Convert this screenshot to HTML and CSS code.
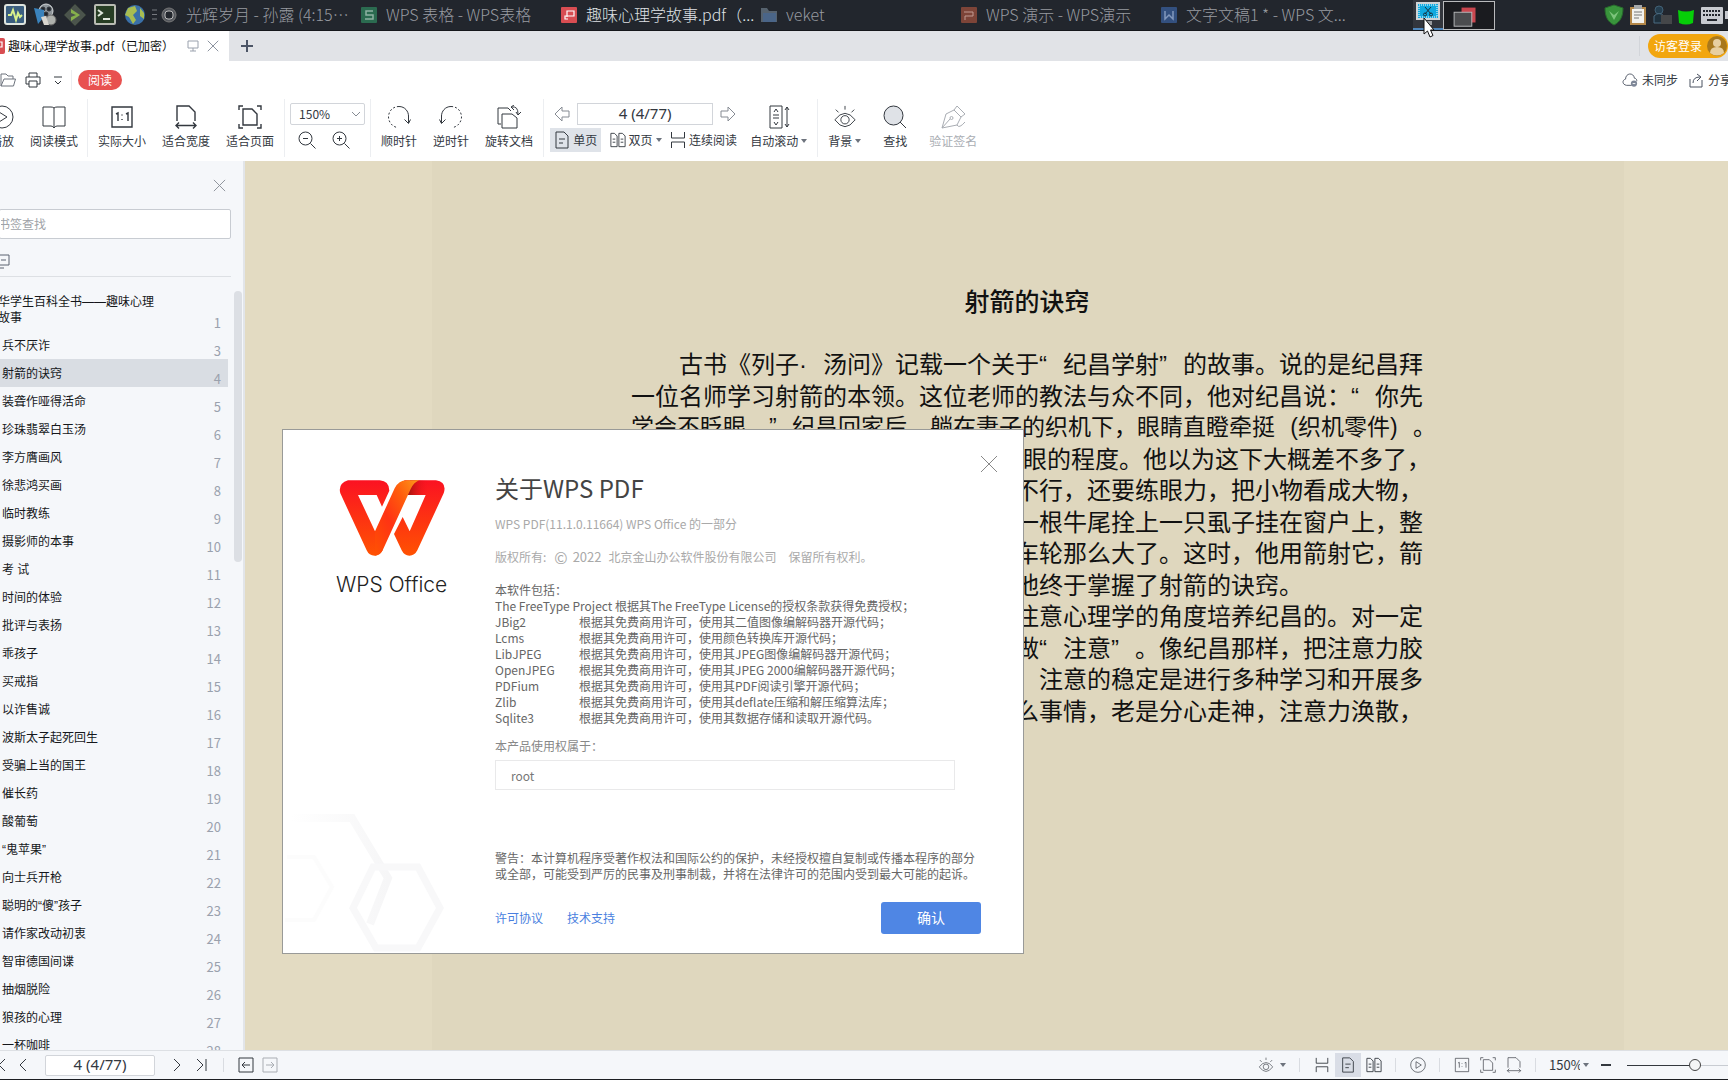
FILE: index.html
```html
<!DOCTYPE html>
<html lang="zh-CN">
<head>
<meta charset="utf-8">
<title>趣味心理学故事.pdf</title>
<link rel="stylesheet" href="styles.css">
</head>
<body>
<svg class="sprite" aria-hidden="true">
  <symbol id="i-cross" viewBox="0 0 16 16"><path d="M2 2l12 12M14 2L2 14"/></symbol>
  <symbol id="i-caret" viewBox="0 0 6 4"><path d="M0 0h6L3 4z" fill="currentColor" stroke="none"/></symbol>
  <symbol id="i-single" viewBox="0 0 16 18"><path d="M2 1h8l4 4v12H2zM5 8h6M5 12h4"/></symbol>
  <symbol id="i-double" viewBox="0 0 18 18"><path d="M1 1.500h4l3 3v12H1zM3 8h3M3 11.500h3M10 1.500h4l3 3v12h-7zM12 8h3M12 11.500h3"/></symbol>
  <symbol id="i-cont" viewBox="0 0 16 18"><path d="M1.500 1v6h13V1M1.500 17v-6h13v6"/></symbol>
  <symbol id="i-actual" viewBox="0 0 24 24"><path d="M2 2h20v20H2zM6 9l2-1v8M16 9l2-1v8M12 9.500v1M12 14v1"/></symbol>
  <symbol id="i-width" viewBox="0 0 24 24"><path d="M3 16V1h12l6 6v9M2 20.500h20M5 17.500l-3 3 3 3M19 17.500l3 3-3 3"/></symbol>
  <symbol id="i-page" viewBox="0 0 24 24"><path d="M5 4h9l5 5v11H5zM1 5V1h4M19 1h4v4M23 19v4h-4M5 23H1v-4"/></symbol>
  <symbol id="i-eye" viewBox="0 0 24 26"><path d="M1 16q11-14 22 0q-11 15-22 0zM12 1v4M2 5l3 3M22 5l-3 3"/><circle cx="12" cy="16" r="4.500"/></symbol>
  <symbol id="i-play" viewBox="0 0 24 24"><circle cx="12" cy="12" r="11"/><path d="M9 7l8 5-8 5z"/></symbol>
  <symbol id="i-rotate" viewBox="0 0 24 24"><path d="M12 1.500c6 0 9.500 5 9.500 9.500v7M17.500 14.500l4 4 2-4"/><path d="M12 1.500C5 1.500 1.500 7 1.500 12s4 10 9 10.500" stroke-dasharray="2 2"/></symbol>
  <symbol id="i-arrow" viewBox="0 0 16 16"><path d="M1 8l7-7v4h7v6H8v4z"/></symbol>
</svg>

<header class="taskbar">
  <div class="launchers">
    <button aria-label="系统监视"><svg viewBox="0 0 24 24"><rect x="2" y="2" width="20" height="19" rx="2" fill="#3b5f80" stroke="#dfe5df" stroke-width="2"/><path d="M5 12h3l2-5 3 10 2-7 2 4 2-2" stroke="#d9f28c" stroke-width="2"/></svg></button>
    <button aria-label="媒体播放器"><svg viewBox="0 0 24 24"><circle cx="13" cy="8" r="7" fill="#8e959a" stroke="#d4d8da"/><circle cx="10" cy="6" r="2" fill="#22262d"/><circle cx="16" cy="6" r="2" fill="#22262d"/><circle cx="13" cy="11" r="2" fill="#22262d"/><path d="M1 5l10 2v7l-6 7z" fill="#3a83bd" stroke="none"/><circle cx="18" cy="17" r="5" fill="#aeb1ad" stroke="#666"/><path d="M8 14l3 8h5l-3-9z" fill="#d9d6cf" stroke="none"/></svg></button>
    <button aria-label="启动"><svg viewBox="0 0 24 24"><path d="M12 1l11 11-11 11L1 12z" fill="#4b544c" stroke="#333b35"/><path d="M8 6l9 6-9 6z" fill="#86b04c" stroke="none"/><path d="M8 10l5 2-5 2z" fill="#4b544c" stroke="none"/></svg></button>
    <button aria-label="终端"><svg viewBox="0 0 24 24"><rect x="2" y="2" width="20" height="19" rx="1" fill="#273d24" stroke="#b9bbb3" stroke-width="2"/><path d="M5 7l4 3-4 3M10 16h7" stroke="#dfe8dc" stroke-width="2"/></svg></button>
    <button aria-label="浏览器"><svg viewBox="0 0 24 24"><circle cx="12" cy="12" r="10" fill="#3a70a8" stroke="none"/><path d="M5 5l7-2 2 5-4 4 3 5-3 4-4-7-4-2zM17 5l4 5v6l-4-3z" fill="#a8bd51" stroke="none"/></svg></button>
  </div>
  <svg class="grip" viewBox="0 0 5 12"><path d="M0 1h5M0 5.500h5M0 10h5" stroke="#777a80"/></svg>
  <nav class="tasks">
    <button><svg viewBox="0 0 16 16"><circle cx="8" cy="8" r="7" fill="#55585e" stroke="#777"/><rect x="4" y="4" width="8" height="8" rx="3" fill="#22262d" stroke="#bbb"/></svg><span>光辉岁月 - 孙露 (4:15⋯</span></button>
    <button><svg viewBox="0 0 16 16"><rect width="16" height="16" rx="1" fill="#2b6b50" stroke="none"/><path d="M12 4H5v4h7v4H4" stroke="#8fb3a2" stroke-width="1.500"/></svg><span>WPS 表格 - WPS表格</span></button>
    <button class="current"><svg viewBox="0 0 16 16"><rect width="16" height="16" rx="1" fill="#d84d52" stroke="none"/><path d="M6 10V4h7v5H4v3h3" stroke="#fff" stroke-width="1.200"/></svg><span>趣味心理学故事.pdf（...</span></button>
    <button><svg viewBox="0 0 16 16"><path d="M0 1h6l2 3h8v11H0z" fill="#56626e" stroke="none"/><path d="M2 6h13v9H2z" fill="#4a6588" stroke="none"/></svg><span>veket</span></button>
    <button><svg viewBox="0 0 16 16"><rect width="16" height="16" rx="1" fill="#7d4438" stroke="none"/><path d="M3 5h9v4H4v4" stroke="#c29a92"/></svg><span>WPS 演示 - WPS演示</span></button>
    <button><svg viewBox="0 0 16 16"><rect width="16" height="16" rx="1" fill="#33507f" stroke="none"/><path d="M4 4v8l4-4 4 4V4" stroke="#8298bd" stroke-width="1.500"/></svg><span>文字文稿1 * - WPS 文...</span></button>
  </nav>
  <button class="shot" aria-label="截图"><svg viewBox="0 0 26 24"><rect x="2" y="1" width="22" height="16" fill="#10a9df" stroke="#cfd3d6" stroke-width="2"/><rect x="4" y="3" width="18" height="12" stroke="#fff" stroke-dasharray="1 1"/><path d="M10 5l6 7M16 5l-6 7" stroke="#173340"/><circle cx="10" cy="12.500" r="1.500" stroke="#173340"/><circle cx="16" cy="12.500" r="1.500" stroke="#173340"/><path d="M10 19h7v4h-7z" fill="#9a9da1" stroke="none"/></svg></button>
  <button class="pager" aria-label="工作区"><svg viewBox="0 0 52 29"><rect x="18" y="6" width="15" height="16" fill="#c9474f" stroke="none"/><rect x="10" y="11" width="19" height="15" fill="#4b4c4f" stroke="#b9babc"/></svg></button>
  <div class="tray">
    <svg viewBox="0 0 20 22"><path d="M10 1l9 3c0 9-3 14-9 17C4 18 1 13 1 4z" fill="#39943c" stroke="#276b2c"/><path d="M5 7l5 9 5-9-5 4z" fill="#7cc47b" stroke="none"/></svg>
    <svg viewBox="0 0 20 22"><rect x="2" y="3" width="16" height="18" fill="#b38748" stroke="none"/><rect x="4" y="5" width="12" height="14" fill="#f2f2ee" stroke="none"/><rect x="6" y="1" width="8" height="4" fill="#a5a8aa" stroke="none"/><path d="M6 8h8M6 11h8M6 14h5" stroke="#777"/></svg>
    <svg viewBox="0 0 20 22"><circle cx="7" cy="6" r="4" fill="#253e4f" stroke="#416075"/><path d="M2 12q5-5 10 0v7H2z" fill="#1f303c" stroke="#4a6a80"/><rect x="9" y="11" width="11" height="9" fill="#454749" stroke="none"/></svg>
    <svg viewBox="0 0 20 22"><path d="M2 6q8 3 16 0l-1 13q-7 3-14 0z" fill="#06cf08" stroke="none"/></svg>
    <svg class="wide" viewBox="0 0 24 22"><rect x="1" y="3" width="22" height="17" rx="1" fill="#c7cad0" stroke="none"/><path d="M3 7h18M3 11h18" stroke="#22262d" stroke-width="2" stroke-dasharray="2 1"/><path d="M7 16h10" stroke="#22262d" stroke-width="2"/></svg>
    <svg class="edge" viewBox="0 0 3 22"><rect y="7" width="3" height="8" fill="#c7cad0" stroke="none"/></svg>
  </div>
  <svg class="cursor" viewBox="0 0 12 21"><path d="M1 1v16l3.500-3 2.500 6 3-1.500L7.500 13H11z" fill="#fff" stroke="#111"/></svg>
</header>

<div class="tabs">
  <div class="tab"><svg class="pdf" viewBox="0 0 16 16"><rect width="16" height="16" rx="2" fill="#d84d52" stroke="none"/><path d="M6 10V4h7v5H4v3h3" stroke="#fff" stroke-width="1.200"/></svg><span>趣味心理学故事.pdf（已加密）</span>
    <svg class="screen" viewBox="0 0 12 12"><path d="M1 1h10v7H1zM6 8v3M3 11h6"/></svg>
    <button aria-label="关闭标签"><svg viewBox="0 0 16 16"><use href="#i-cross"/></svg></button></div>
  <button class="plus" aria-label="新建"><svg viewBox="0 0 12 12"><path d="M6 0v12M0 6h12"/></svg></button>
  <span class="bar"></span>
  <button class="login">访客登录<svg viewBox="0 0 20 20"><circle cx="10" cy="10" r="10" fill="#a8781c" stroke="none"/><circle cx="10" cy="7" r="4" fill="#e8cfa0" stroke="none"/><path d="M3 17q0-6 7-6t7 6q-7 5-14 0z" fill="#e8cfa0" stroke="none"/></svg></button>
</div>

<div class="quick">
  <button aria-label="打开"><svg viewBox="0 0 16 16"><path d="M1 14V2h5l2 2h5v3M1 14l3-7h11.500l-2 7z"/></svg></button>
  <button aria-label="打印"><svg class="dark" viewBox="0 0 16 16"><path d="M4 5V1h8v4M4 12H1V5h14v7h-3M4 9h8v6H4z"/></svg></button>
  <button aria-label="更多"><svg class="dark" viewBox="0 0 16 16"><path d="M4 5h8M5 9l3 3 3-3"/></svg></button>
  <span class="bar"></span>
  <button class="mode">阅读</button>
  <div class="sync">
    <button><svg viewBox="0 0 18 16"><path d="M11 14H5C0 13 0 8 4 7c0-7 9-8 10-1 2 0 3 2 2.500 3.500"/><circle cx="13.500" cy="12" r="3.500" fill="#7d8697" stroke="none"/><path d="M12 12h3" stroke="#fff"/></svg>未同步</button>
    <button><svg viewBox="0 0 16 16"><path d="M2 7v8h12V8M5 11q0-6 7-6M9 2l4 3-4 4"/></svg>分享</button>
  </div>
</div>

<div class="toolbar">
  <div class="group first">
    <button class="tool"><svg viewBox="0 0 24 24"><use href="#i-play"/></svg>播放</button>
    <button class="tool"><svg viewBox="0 0 24 24"><path d="M12 3q-1-1-3-1H1v19h8q2 0 3 2 1-2 3-2h8V2h-8q-2 0-3 1zv20"/></svg>阅读模式</button>
  </div>
  <div class="group">
    <button class="tool"><svg class="bold" viewBox="0 0 24 24"><use href="#i-actual"/></svg>实际大小</button>
    <button class="tool"><svg class="bold" viewBox="0 0 24 24"><use href="#i-width"/></svg>适合宽度</button>
    <button class="tool"><svg class="bold" viewBox="0 0 24 24"><use href="#i-page"/></svg>适合页面</button>
  </div>
  <div class="group zoomer">
    <label class="combo"><select aria-label="缩放"><option>150%</option></select><svg viewBox="0 0 10 6"><path d="M1 1l4 4 4-4"/></svg></label>
    <div class="pair">
      <button aria-label="缩小"><svg viewBox="0 0 18 18"><circle cx="7.500" cy="7.500" r="6.500"/><path d="M12.500 12.500l5 5M5 7.500h5"/></svg></button>
      <button aria-label="放大"><svg viewBox="0 0 18 18"><circle cx="7.500" cy="7.500" r="6.500"/><path d="M12.500 12.500l5 5M5 7.500h5M7.500 5v5"/></svg></button>
    </div>
  </div>
  <div class="group">
    <button class="tool"><svg viewBox="0 0 24 24"><use href="#i-rotate"/></svg>顺时针</button>
    <button class="tool"><svg class="flip" viewBox="0 0 24 24"><use href="#i-rotate"/></svg>逆时针</button>
    <button class="tool"><svg viewBox="0 0 24 24"><path d="M4 19H1V3h10l3 3M5 9h10l5 4v10H5zM15 2q6-1 6 7M17 0l-3 2 3 3M19 7l2 3 3-3"/></svg>旋转文档</button>
  </div>
  <div class="group pages">
    <div class="nav">
      <div class="pair">
        <button aria-label="上一页"><svg class="soft" viewBox="0 0 16 16"><use href="#i-arrow"/></svg></button>
        <input aria-label="页码" value="4 (4/77)">
        <button aria-label="下一页"><svg class="soft flip" viewBox="0 0 16 16"><use href="#i-arrow"/></svg></button>
      </div>
      <div class="views">
        <button class="on"><svg viewBox="0 0 16 18"><use href="#i-single"/></svg>单页</button>
        <button><svg viewBox="0 0 18 18"><use href="#i-double"/></svg>双页<svg class="caret" viewBox="0 0 6 4"><use href="#i-caret"/></svg></button>
        <button><svg viewBox="0 0 16 18"><use href="#i-cont"/></svg>连续阅读</button>
      </div>
    </div>
    <button class="tool"><svg viewBox="0 0 24 24"><path d="M3 1h12v22H3zM6 10h6M6 13h6M7 7l2-3 2 3M7 17l2 3 2-3M20 2v20M18 5l2-3 2 3M18 19l2 3 2-3"/></svg><span>自动滚动<svg class="caret" viewBox="0 0 6 4"><use href="#i-caret"/></svg></span></button>
  </div>
  <div class="group last">
    <button class="tool"><svg viewBox="0 0 24 26"><use href="#i-eye"/></svg><span>背景<svg class="caret" viewBox="0 0 6 4"><use href="#i-caret"/></svg></span></button>
    <button class="tool"><svg viewBox="0 0 24 24"><circle cx="10.500" cy="10.500" r="9.500" fill="#dfe2e7"/><path d="M17 17l6 6"/></svg>查找</button>
    <button class="tool" disabled><svg viewBox="0 0 24 24"><path d="M1 23l4-14 8-4 7 7-4 8zM1 23l8-9M13 5l3-4 8 8-4 3M16 20q2 4 8-3"/><circle cx="10.500" cy="13" r="1.500"/></svg>验证签名</button>
  </div>
</div>

<main class="work">
  <aside class="side">
    <div class="head"><button aria-label="关闭书签"><svg viewBox="0 0 16 16"><use href="#i-cross"/></svg></button></div>
    <div class="search"><input aria-label="书签查找" placeholder="书签查找"></div>
    <div class="opts"><button aria-label="折叠"><svg viewBox="0 0 16 16"><path d="M0 2h14v10H0M6 7h5M1 15h8"/></svg></button></div>
    <div class="scroller">
      <ul>
        <li class="root"><button><span>中华学生百科全书——趣味心理学故事</span><b>1</b></button></li>
        <li><button><span>兵不厌诈</span><b>3</b></button></li>
        <li class="sel"><button><span>射箭的诀窍</span><b>4</b></button></li>
        <li><button><span>装聋作哑得活命</span><b>5</b></button></li>
        <li><button><span>珍珠翡翠白玉汤</span><b>6</b></button></li>
        <li><button><span>李方膺画风</span><b>7</b></button></li>
        <li><button><span>徐悲鸿买画</span><b>8</b></button></li>
        <li><button><span>临时教练</span><b>9</b></button></li>
        <li><button><span>摄影师的本事</span><b>10</b></button></li>
        <li><button><span>考 试</span><b>11</b></button></li>
        <li><button><span>时间的体验</span><b>12</b></button></li>
        <li><button><span>批评与表扬</span><b>13</b></button></li>
        <li><button><span>乖孩子</span><b>14</b></button></li>
        <li><button><span>买戒指</span><b>15</b></button></li>
        <li><button><span>以诈售诚</span><b>16</b></button></li>
        <li><button><span>波斯太子起死回生</span><b>17</b></button></li>
        <li><button><span>受骗上当的国王</span><b>18</b></button></li>
        <li><button><span>催长药</span><b>19</b></button></li>
        <li><button><span>酸葡萄</span><b>20</b></button></li>
        <li><button><span>“鬼苹果”</span><b>21</b></button></li>
        <li><button><span>向士兵开枪</span><b>22</b></button></li>
        <li><button><span>聪明的“傻”孩子</span><b>23</b></button></li>
        <li><button><span>请作家改动初衷</span><b>24</b></button></li>
        <li><button><span>智审德国间谍</span><b>25</b></button></li>
        <li><button><span>抽烟脱险</span><b>26</b></button></li>
        <li><button><span>狼孩的心理</span><b>27</b></button></li>
        <li><button><span>一杯咖啡</span><b>28</b></button></li>
      </ul>
      <div class="thumb"></div>
    </div>
  </aside>
  <section class="viewer">
    <article class="page">
      <h1>射箭的诀窍</h1>
      <div class="lines">
        <p class="indent">古书《列子<i>·</i>汤问》记载一个关于<i>“</i>纪昌学射<i>”</i>的故事。说的是纪昌拜</p>
        <p>一位名师学习射箭的本领。这位老师的教法与众不同，他对纪昌说：<i>“</i>你先</p>
        <p class="tight">学会不眨眼。<i>”</i>纪昌回家后，躺在妻子的织机下，眼睛直瞪牵挺<i class="open">(</i>织机零件<i>)</i>。</p>
        <p class="tail over">眨眼的程度。他以为这下大概差不多了，</p>
        <p class="tail">不行，还要练眼力，把小物看成大物，</p>
        <p class="tail">一根牛尾拴上一只虱子挂在窗户上，整</p>
        <p class="tail">车轮那么大了。这时，他用箭射它，箭</p>
        <p class="tail short">他终于掌握了射箭的诀窍。</p>
        <p class="tail">注意心理学的角度培养纪昌的。对一定</p>
        <p class="tail">做<i>“</i>注意<i>”</i>。像纪昌那样，把注意力胶</p>
        <p class="tail">注意的稳定是进行多种学习和开展多</p>
        <p class="tail">么事情，老是分心走神，注意力涣散，</p>
      </div>
    </article>
  </section>
</main>

<footer class="status">
  <button aria-label="首页" class="cut"><svg viewBox="0 0 16 16"><path d="M14 2L8 8l6 6M5 2v12"/></svg></button>
  <button aria-label="上一页"><svg viewBox="0 0 16 16"><path d="M11 2L5 8l6 6"/></svg></button>
  <input aria-label="当前页" value="4 (4/77)">
  <button aria-label="下一页"><svg viewBox="0 0 16 16"><path d="M5 2l6 6-6 6"/></svg></button>
  <button aria-label="末页"><svg viewBox="0 0 16 16"><path d="M4 2l6 6-6 6M13 2v12"/></svg></button>
  <span class="sep"></span>
  <button aria-label="后退"><svg viewBox="0 0 16 16"><path d="M1 1h14v14H1zM4 8h8M7 5L4 8l3 3"/></svg></button>
  <button aria-label="前进" disabled><svg viewBox="0 0 16 16"><path d="M1 1h14v14H1zM4 8h8M9 5l3 3-3 3"/></svg></button>
  <div class="modes">
    <div class="set eyes"><button aria-label="护眼"><svg viewBox="0 0 24 26"><use href="#i-eye"/></svg><svg class="caret" viewBox="0 0 6 4"><use href="#i-caret"/></svg></button></div>
    <div class="set"><button aria-label="连续阅读"><svg viewBox="0 0 16 18"><use href="#i-cont"/></svg></button><button class="on" aria-label="单页"><svg viewBox="0 0 16 18"><use href="#i-single"/></svg></button><button aria-label="双页"><svg viewBox="0 0 18 18"><use href="#i-double"/></svg></button></div>
    <div class="set"><button aria-label="播放"><svg viewBox="0 0 24 24"><use href="#i-play"/></svg></button></div>
    <div class="set"><button aria-label="实际大小"><svg viewBox="0 0 24 24"><use href="#i-actual"/></svg></button><button aria-label="适合页面"><svg viewBox="0 0 24 24"><use href="#i-page"/></svg></button><button aria-label="适合宽度"><svg viewBox="0 0 24 24"><use href="#i-width"/></svg></button></div>
    <label class="pct"><select aria-label="显示比例"><option>150%</option></select><svg class="caret" viewBox="0 0 6 4"><use href="#i-caret"/></svg></label>
    <button class="minus" aria-label="缩小"><svg viewBox="0 0 10 10"><path d="M0 5h10"/></svg></button>
    <input type="range" aria-label="缩放滑块" min="0" max="100" value="70">
  </div>
</footer>

<div class="dialog" role="dialog" aria-labelledby="about">
  <svg class="hex" viewBox="0 0 170 150">
    <defs><linearGradient id="fade"><stop offset="0" stop-color="#fff"/><stop offset="1" stop-color="#f6f6f7"/></linearGradient></defs>
    <path d="M8 15h61l36 60-18 46" stroke="url(#fade)" stroke-width="8"/>
    <path d="M4 54h27l18 30-18 33H2" stroke="#fcfcfc" stroke-width="4"/>
    <path d="M90 64h45l22 41-22 40H93L70 105z" stroke="#f8f8f9" stroke-width="7"/>
  </svg>
  <div class="brand">
    <svg viewBox="176 164 318 228">
      <defs>
        <linearGradient id="red" x2="0" y2="1"><stop offset="0" stop-color="#fb1222"/><stop offset="1" stop-color="#ff5202"/></linearGradient>
        <linearGradient id="org" x1="1" y1="0" x2="0" y2="1"><stop offset="0" stop-color="#fc9a1c"/><stop offset=".3" stop-color="#ff5d0c"/><stop offset=".6" stop-color="#ff3314"/><stop offset="1" stop-color="#ff5202"/></linearGradient>
        <linearGradient id="shade"><stop offset="0" stop-color="#8c1408"/><stop offset="1" stop-color="#fb1222" stop-opacity="0"/></linearGradient>
      </defs>
      <path d="M203 165h95q29 2 29 31l-22 48-16-35h-56l51 109 23 57q-8 16-24 16-17 0-24-16l-79-171q-8-29 23-39z" fill="url(#red)" stroke="none"/>
      <path d="M372 165h95q34 6 23 39l-79 171q-8 16-24 16-15 0-23-16l-23-49 26-51 21 43 48-109h-76z" fill="url(#red)" stroke="none"/>
      <path d="M390 165h55l-8 44h-62z" fill="url(#shade)" stroke="none"/>
      <path d="M284 318l59-129q12-24 36-24h37q-16 7-25 26l-84 184q-8 14-23 16z" fill="url(#org)" stroke="none"/>
    </svg>
    <span>WPS Office</span>
  </div>
  <div class="info">
    <h2 id="about">关于WPS PDF</h2>
    <p class="ver">WPS PDF(11.1.0.11664) WPS Office 的一部分</p>
    <p class="copy"><span>版权所有:</span><span class="c">©</span><span class="yr">2022</span><span>北京金山办公软件股份有限公司</span><span class="rights">保留所有权利。</span></p>
    <div class="libs">
      <p>本软件包括：</p>
      <p>The FreeType Project 根据其The FreeType License的授权条款获得免费授权；</p>
      <dl>
        <dt>JBig2</dt><dd>根据其免费商用许可，使用其二值图像编解码器开源代码；</dd>
        <dt>Lcms</dt><dd>根据其免费商用许可，使用颜色转换库开源代码；</dd>
        <dt>LibJPEG</dt><dd>根据其免费商用许可，使用其JPEG图像编解码器开源代码；</dd>
        <dt>OpenJPEG</dt><dd>根据其免费商用许可，使用其JPEG 2000编解码器开源代码；</dd>
        <dt>PDFium</dt><dd>根据其免费商用许可，使用其PDF阅读引擎开源代码；</dd>
        <dt>Zlib</dt><dd>根据其免费商用许可，使用其deflate压缩和解压缩算法库；</dd>
        <dt>Sqlite3</dt><dd>根据其免费商用许可，使用其数据存储和读取开源代码。</dd>
      </dl>
    </div>
    <label class="owner" for="owner">本产品使用权属于：</label>
    <input id="owner" value="root" readonly>
    <p class="warn">警告：本计算机程序受著作权法和国际公约的保护，未经授权擅自复制或传播本程序的部分<br>或全部，可能受到严厉的民事及刑事制裁，并将在法律许可的范围内受到最大可能的起诉。</p>
    <div class="foot"><a href="#license">许可协议</a><a href="#support">技术支持</a><button>确认</button></div>
  </div>
  <button class="close" aria-label="关闭"><svg viewBox="0 0 16 16"><path d="M0 0l16 16M16 0L0 16"/></svg></button>
</div>
</body>
</html>
```
FILE: styles.css
```css
* { box-sizing: border-box; }
body {
  margin: 0;
  height: 100vh;
  display: flex;
  flex-direction: column;
  overflow: hidden;
  position: relative;
  background: #fff;
  color: #33383f;
  font: 12px/16px "Noto Sans CJK SC", sans-serif;
  text-spacing-trim: space-all;
}
button, input, select { font: inherit; color: inherit; margin: 0; }
button { padding: 0; border: 0; background: none; white-space: nowrap; }
h1, h2, p, ul, dl, dd { margin: 0; padding: 0; }
svg { display: block; flex: none; fill: none; stroke: currentColor; stroke-width: 1; }
.sprite { position: absolute; width: 0; height: 0; }
.caret { width: 6px; height: 4px; color: #6d737d; }
.flip { transform: scaleX(-1); }
.bar { width: 1px; height: 20px; background: #d2d5da; }

/* desktop panel */
.taskbar {
  flex: none;
  height: 31px;
  display: flex;
  align-items: center;
  position: relative;
  background: #22262d;
  border-bottom: 1px solid #15171b;
}
.launchers { display: flex; gap: 6px; padding-left: 3px; }
.launchers svg { width: 24px; height: 24px; }
.grip { width: 5px; height: 12px; margin: 0 4px 0 5px; }
.tasks { display: flex; flex: 0 1 1200px; }
.tasks button {
  flex: 0 1 200px;
  display: flex;
  align-items: center;
  gap: 9px;
  min-width: 0;
  overflow: hidden;
  color: #989ba1;
  font-size: 16px;
  font-weight: 300;
  line-height: 26px;
}
.tasks span { padding-bottom: 3px; }
.tasks .current { color: #dfe1e5; }
.tasks svg { width: 16px; height: 16px; }
.shot { margin-left: 52px; width: 30px; height: 30px; padding: 2px; background: #33363d; border-bottom: 2px solid #4f87bd; }
.shot svg { width: 26px; height: 24px; }
.pager { width: 52px; height: 29px; border: 1px solid #b9babc; background: #1a1b1f; }
.pager svg { width: 50px; height: 27px; }
.tray { margin-left: auto; display: flex; align-items: center; gap: 4px; }
.tray svg { width: 20px; height: 22px; }
.tray .wide { width: 24px; }
.tray .edge { width: 3px; margin-left: -3px; }
.cursor { position: absolute; left: 1423px; top: 17px; width: 12px; height: 21px; z-index: 5; }

/* document tabs */
.tabs { flex: none; height: 30px; display: flex; align-items: center; background: #e1e3e7; color: #4c5566; }
.tab { width: 229px; height: 30px; display: flex; align-items: center; background: #fff; color: #111; }
.tab .pdf { width: 16px; height: 16px; margin: 0 3px 0 -11px; }
.tab .screen { width: 12px; height: 12px; margin-left: auto; color: #9aa1ad; }
.tab button { margin: 0 9px 0 7px; color: #7d8592; }
.tab button svg { width: 14px; height: 14px; }
.plus { margin-left: 12px; }
.plus svg { width: 12px; height: 12px; stroke-width: 2; }
.tabs .bar { margin: 0 8px 0 auto; }
.login {
  height: 24px;
  padding: 0 1px 0 6px;
  display: flex;
  align-items: center;
  gap: 5px;
  border-radius: 12px;
  background: #f2a60e;
  color: #fff;
}
.login svg { width: 20px; height: 20px; }

/* quick access row */
.quick { flex: none; height: 38px; display: flex; align-items: center; color: #6d737d; }
.quick svg { width: 16px; height: 16px; }
.quick .dark { color: #33383f; }
.quick > button { margin-right: 9px; }
.quick > .mode {
  margin-left: 6px;
  width: 44px;
  height: 20px;
  border-radius: 10px;
  background: #e8514f;
  color: #fff;
}
.quick .bar { background: #eceef1; margin-left: -4px; }
.sync { margin-left: auto; display: flex; gap: 10px; margin-right: -4px; color: #33383f; }
.sync button { display: flex; align-items: center; gap: 4px; }
.sync svg { color: #4a5261; }

/* ribbon */
.toolbar { flex: none; height: 62px; display: flex; padding-bottom: 4px; }
.group { display: flex; gap: 16px; padding: 6px 10px 0; border-right: 1px solid #eceef1; }
.group.first { padding: 6px 9px 0 0; margin-left: -10px; }
.tool { display: flex; flex-direction: column; align-items: center; gap: 4px; height: 44px; }
.tool > svg { width: 24px; height: 24px; }
.tool span { display: flex; align-items: center; gap: 3px; }
.bold { stroke-width: 1.4; }
.tool:disabled { color: #a9adb3; }
.soft { color: #868b93; }
.pair { display: flex; align-items: center; }
.group.zoomer { flex-direction: column; gap: 6px; padding: 4px 5px 0; }
.combo { position: relative; display: block; }
.combo select {
  appearance: none;
  display: block;
  width: 75px;
  height: 22px;
  padding: 0 8px;
  border: 1px solid #d2d5da;
  border-radius: 2px;
  background: #fff;
}
.combo svg { position: absolute; right: 4px; top: 8px; width: 10px; height: 6px; color: #868b93; }
.zoomer .pair { justify-content: space-between; padding: 0 15px 0 8px; }
.zoomer .pair svg { width: 18px; height: 18px; }
.group.pages { padding: 4px 10px 0 6px; gap: 13px; }
.group.pages .tool { margin-top: 2px; }
.nav { width: 187px; }
.nav .pair { padding: 0 1px 0 4px; justify-content: space-between; }
.nav .pair svg { width: 16px; height: 16px; }
.nav input, .status > input {
  width: 136px;
  height: 22px;
  border: 1px solid #d2d5da;
  background: #fff;
  text-align: center;
  font: 15px/18px "Noto Sans", sans-serif;
  padding: 0 0 2px;
}
.views { display: flex; justify-content: space-between; margin-top: 3px; }
.views button { display: flex; align-items: center; gap: 3px; height: 24px; }
.views .on { background: #dfe3e9; padding: 0 4px; }
.views svg { width: 16px; height: 18px; }
.views .caret { width: 6px; height: 4px; }
.group.last { gap: 22px; border: 0; }

/* work area */
.work { flex: 1; min-height: 0; display: flex; }
.side {
  flex: none;
  width: 245px;
  display: flex;
  flex-direction: column;
  background: #f5f7fa;
  border-right: 2px solid #e2e5e9;
  color: #15171b;
}
.head { height: 48px; padding: 0 16px; display: flex; align-items: center; justify-content: flex-end; color: #8a8f98; }
.head svg { width: 15px; height: 15px; }
.search { overflow: hidden; }
.search input {
  display: block;
  width: 232px;
  height: 30px;
  margin-left: -1px;
  padding: 0 0 2px 1px;
  border: 1px solid #c8ccd2;
  border-radius: 2px;
  background: #fff;
}
.search input::placeholder { color: #a0a3a8; text-indent: -3px; }
.opts { height: 38px; width: 231px; padding-top: 14px; margin-bottom: 10px; border-bottom: 1px solid #dde0e4; color: #5a6270; }
.opts svg { width: 16px; height: 16px; margin-left: -5px; }
.scroller { flex: 1; min-height: 0; display: flex; overflow: hidden; gap: 6px; }
.scroller ul { width: 228px; list-style: none; }
.side li button { width: 100%; min-height: 28px; padding: 0 7px 0 2px; display: flex; justify-content: space-between; text-align: left; white-space: normal; }
.side li span { padding: 7px 0 5px; }
.side .root span { width: 168px; margin-left: -16px; }
.side li b { align-self: flex-end; font-size: 13px; font-weight: 400; color: #9aa1ad; }
.side .sel { background: #d9dde3; }
.thumb { width: 8px; height: 271px; margin-top: 4px; border-radius: 4px; background: #dcdfe4; }
.viewer { flex: 1; min-width: 0; padding: 0 104px 0 187px; background: #e3dbc2; display: flex; }
.page { flex: 1; min-width: 0; padding: 123px 201px 0 199px; background: #dfd7be; color: #111; }
.page h1 { font-size: 25px; line-height: 32px; font-weight: 500; text-align: center; }
.lines {
  height: 378px;
  margin-top: 31px;
  display: grid;
  grid-template: repeat(12, minmax(0, 1fr)) / minmax(0, 1fr);
  font-size: 24px;
  line-height: 31px;
  white-space: nowrap;
}
.lines i { display: inline-block; width: 24px; font-style: normal; line-height: 24px; }
.indent { text-indent: 2em; }
.indent i { text-indent: 0; }
.lines i, .side li span { font-family: "Liberation Sans", "Noto Sans CJK SC", sans-serif; }
.tight { font-size: 23px; }
.tight i { width: 23px; }
.tight .open { text-align: right; }
.tail { justify-self: end; }
.over { margin-right: -8px; }
.short { padding-right: 120px; }

/* status bar */
.status {
  flex: none;
  height: 30px;
  display: flex;
  align-items: center;
  background: #f5f7fa;
  border-top: 1px solid #dde0e4;
  border-bottom: 1px solid #1c1e22;
}
.status svg { width: 16px; height: 16px; }
.status .caret { width: 6px; height: 4px; }
.status > button { margin-right: 8px; }
.status > .cut { margin-left: -9px; }
.status > input { width: 110px; height: 21px; margin: 0 14px 0 6px; border-radius: 2px; }
.status button:disabled { color: #a9adb3; }
.sep { width: 1px; height: 14px; margin: 0 14px 0 6px; background: #d9dce1; }
.modes { margin-left: auto; display: flex; align-items: center; }
.set { display: flex; align-items: center; height: 24px; padding: 0 9px; position: relative; }
.set button { width: 26px; height: 24px; display: flex; align-items: center; justify-content: center; }
.set .on { background: #d9dde6; }
.set::after { content: ""; position: absolute; right: 0; width: 1px; height: 14px; background: #d9dce1; }
.set.eyes { padding: 0 14px 0 10px; }
.set.eyes button { width: 28px; gap: 6px; }
.pct { display: flex; align-items: center; padding-left: 13px; gap: 3px; }
.pct select { appearance: none; width: 31px; padding: 0; border: 0; background: none; font-size: 13px; }
.minus { margin: 0 16px 0 12px; }
.status .minus svg { width: 10px; height: 10px; stroke-width: 2; }
input[type="range"] {
  appearance: none;
  width: 101px;
  height: 14px;
  background: linear-gradient(#33383f, #33383f) 0 50% / 62px 1px no-repeat, linear-gradient(#c8ccd2, #c8ccd2) 0 50% / 100% 1px no-repeat;
}
input[type="range"]::-webkit-slider-thumb {
  appearance: none;
  width: 12px;
  height: 12px;
  border: 1px solid #444;
  border-radius: 6px;
  background: #f5f5f5;
}

/* about window */
.dialog {
  position: absolute;
  left: 282px;
  top: 429px;
  width: 742px;
  height: 525px;
  display: flex;
  background: #fff;
  border: 1px solid #999a98;
}
.hex { position: absolute; left: 0; bottom: 0; width: 170px; height: 150px; }
.brand { width: 212px; padding: 50px 0 0 53px; position: relative; }
.brand svg { width: 108px; height: 76px; margin-left: 2px; }
.brand span { display: block; margin-top: 15px; font: 300 21px/28px Inter, sans-serif; color: #222; white-space: nowrap; }
.info { width: 486px; color: #666; }
.info h2 { margin-top: 42px; font-size: 24px; line-height: 32px; font-weight: 400; color: #444; }
.ver { margin-top: 12px; color: #a9a9a9; }
.copy { margin-top: 17px; display: flex; align-items: center; color: #a9a9a9; }
.copy .c { margin: 0 5px 0 8px; font-size: 16px; }
.copy .yr { margin-right: 7px; font-size: 13px; }
.rights { margin-left: 12px; }
.libs { margin-top: 17px; white-space: nowrap; }
.libs dl { display: grid; grid-template-columns: 84px 1fr; }
.owner { display: block; margin-top: 12px; color: #888; }
.info input { display: block; width: 460px; height: 30px; margin-top: 6px; padding: 0 15px; border: 1px solid #e9e9ea; color: #777; }
.warn { margin-top: 60px; white-space: nowrap; }
.foot { display: flex; align-items: center; gap: 24px; margin-top: 20px; }
.foot a { color: #4a7fe0; text-decoration: none; }
.foot button { margin-left: auto; width: 100px; height: 32px; padding-bottom: 2px; border-radius: 3px; background: #4f86e4; color: #fff; font-size: 14px; }
.close { position: absolute; right: 26px; top: 26px; color: #888; }
.close svg { width: 16px; height: 16px; }
```
